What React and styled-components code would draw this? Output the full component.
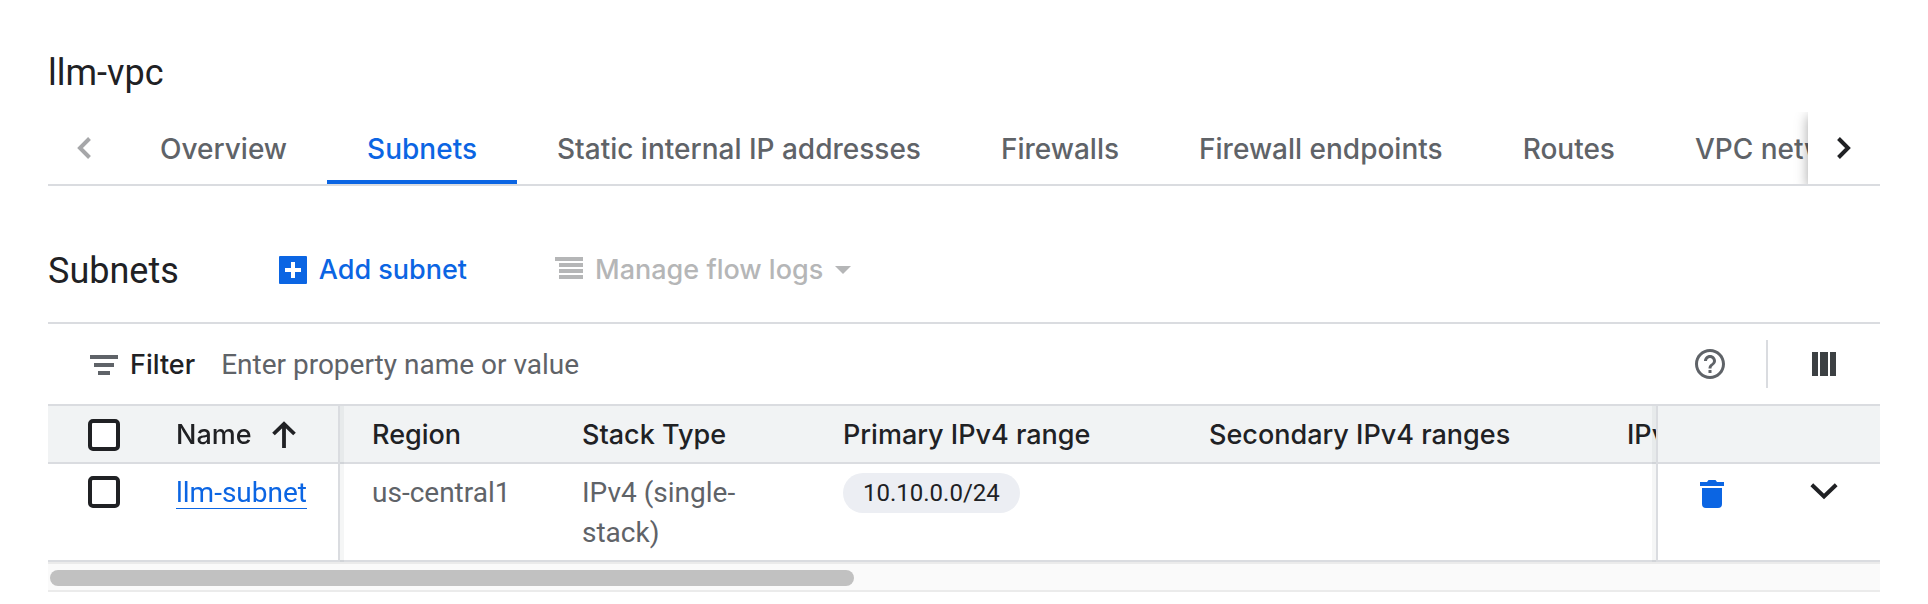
import React from 'react';
import styled, { createGlobalStyle, css } from 'styled-components';

const color = {
  text: '#202124',
  muted: '#5f6368',
  primary: '#0b65e3',
  disabled: '#b5b6b7',
  line: '#dadce0',
  head: '#f1f3f4',
  chip: '#eceef3',
};
const brand = 'Inter, Roboto, sans-serif';
const plain = 'Roboto, sans-serif';

const GlobalStyle = createGlobalStyle`
  *, *::before, *::after { box-sizing: border-box; }
  body { margin: 0; background: #fff; color: ${color.text}; font: 400 28px/40px ${plain}; }
  button { margin: 0; padding: 0; border: 0; background: none; font: inherit; color: inherit; cursor: pointer; }
  svg { display: block; flex: none; fill: currentColor; }
`;

const Page = styled.main`
  padding: 48px 48px 12px;
`;

const Title = styled.h1`
  margin: 0 0 14px;
  font: 400 36px/50px ${plain};
`;

const TabBar = styled.nav`
  display: flex;
  overflow: hidden;
  border-bottom: 2px solid ${color.line};
`;

const TabList = styled.div`
  display: flex;
  flex: 1;
  min-width: 0;
  overflow: hidden;
`;

const Tab = styled.button`
  flex: none;
  height: 72px;
  padding: 6px 40px 0;
  border-bottom: 4px solid ${(p) => (p.$active ? color.primary : 'transparent')};
  color: ${(p) => (p.$active ? color.primary : color.muted)};
  font: 500 28px/40px ${brand};
  white-space: nowrap;
`;

const Pager = styled.button`
  display: grid;
  flex: none;
  place-items: center;
  width: 72px;
  height: 72px;
  background: #fff;
  ${(p) =>
    p.$raised &&
    css`
      z-index: 1;
      box-shadow: 0 4px 12px rgba(0, 0, 0, 0.35);
    `}
  &:disabled { color: #a6a7a9; cursor: default; }
`;

const SectionHead = styled.header`
  display: flex;
  align-items: center;
  height: 104px;
  margin-top: 32px;
`;

const SectionTitle = styled.h2`
  margin: 0 100px 0 0;
  padding-top: 2px;
  font: 400 36px/48px ${plain};
`;

const Action = styled.button`
  display: flex;
  align-items: center;
  gap: 12px;
  margin-right: 88px;
  color: ${color.primary};
  font: 500 27px/40px ${brand};
  white-space: nowrap;
  &:disabled { color: ${color.disabled}; cursor: default; }
`;

const FilterBar = styled.div`
  display: flex;
  align-items: center;
  height: 84px;
  padding: 0 44px 0 42px;
  border: solid ${color.line};
  border-width: 2px 0;
`;

const FilterLabel = styled.label`
  display: flex;
  align-items: center;
  gap: 12px;
  margin-right: 26px;
  padding-top: 2px;
  color: ${color.text};
  font: 500 27px/40px ${brand};
  svg { color: ${color.muted}; }
`;

const FilterInput = styled.input`
  flex: 1;
  min-width: 0;
  padding: 2px 0 0;
  border: 0;
  outline: 0;
  color: ${color.text};
  font: 400 28px/40px ${plain};
  &::placeholder { color: ${color.muted}; opacity: 1; }
`;

const IconButton = styled.button`
  display: block;
  color: ${(p) => p.$color || color.text};
`;

const Divider = styled.span`
  width: 2px;
  height: 48px;
  margin: 0 44px 0 38px;
  background: ${color.line};
`;

const TableScroller = styled.div`
  overflow-x: auto;
  scrollbar-width: none;
`;

const Table = styled.table`
  width: 100%;
  min-width: 2400px;
  table-layout: fixed;
  border-collapse: separate;
  border-spacing: 0;
`;

const Col = styled.col`
  width: ${(p) => p.$width}px;
`;

const pinned = css`
  position: sticky;
  z-index: 1;
  ${(p) => p.$pin === 'select' && 'left: 0;'}
  ${(p) =>
    p.$pin === 'name' &&
    css`
      left: 96px;
      border-right: 2px solid ${color.line};
      box-shadow: 4px 0 rgba(60, 80, 70, 0.05);
    `}
  ${(p) =>
    p.$pin === 'actions' &&
    css`
      right: 0;
      border-left: 2px solid ${color.line};
      box-shadow: -4px 0 rgba(60, 80, 70, 0.05);
    `}
`;

const HeadCell = styled.th`
  height: 58px;
  padding: 2px 0 0 ${(p) => (p.$pin === 'select' ? 40 : 32)}px;
  border-bottom: 2px solid ${color.line};
  background: ${color.head};
  font: 500 27px/40px ${brand};
  text-align: left;
  white-space: nowrap;
  ${(p) => p.$pin && pinned}
`;

const Cell = styled.td`
  height: 98px;
  padding: 9px 32px 7px;
  border-bottom: 2px solid ${color.line};
  background: #fff;
  color: ${color.muted};
  vertical-align: top;
  ${(p) => p.$pin && pinned}
  ${(p) => p.$pin === 'select' && 'padding: 12px 0 0 40px;'}
  ${(p) => p.$pin === 'name' && 'padding-right: 0;'}
`;

const SortButton = styled.button`
  display: flex;
  align-items: center;
  gap: 20px;
`;

const Checkbox = styled.input`
  display: block;
  appearance: none;
  width: 32px;
  height: 32px;
  margin: 0;
  border: 4px solid ${color.text};
  border-radius: 5px;
  background: #fff;
  &:checked { background: ${color.primary}; border-color: ${color.primary}; }
`;

const SubnetLink = styled.a`
  display: inline-block;
  height: 36px;
  border-bottom: 1px solid ${color.primary};
  color: ${color.primary};
  text-decoration: none;
`;

const Chip = styled.span`
  display: inline-block;
  padding: 0 20px;
  border-radius: 20px;
  background: ${color.chip};
  color: ${color.text};
  font: 400 24px/40px ${plain};
  vertical-align: top;
`;

const RowActions = styled.div`
  display: flex;
  align-items: center;
  justify-content: space-between;
  height: 42px;
  padding: 0 10px;
`;

const ScrollTrack = styled.div`
  padding: 6px 2px 4px;
  border: solid #ebebeb;
  border-width: 2px 0;
  background: #fafafa;
`;

const ScrollThumb = styled.div`
  width: 44%;
  height: 16px;
  border-radius: 8px;
  background: #c1c1c1;
`;

const Chevron = ({ dir }) => {
  const [w, h, d] = {
    left: [14, 22, 'M12.5 1.5 3 11l9.5 9.5'],
    right: [14, 22, 'M1.5 1.5 11 11l-9.5 9.5'],
    down: [28, 22, 'M1.8 1.8 14 13.500 26.200 1.800'],
  }[dir];
  return (
    <svg width={w} height={h} viewBox={`0 0 ${w} ${h}`} aria-hidden="true">
      <path d={d} fill="none" stroke="currentColor" strokeWidth="4" />
    </svg>
  );
};

const AddIcon = () => (
  <svg width="28" height="28" viewBox="0 0 28 28" aria-hidden="true">
    <path fillRule="evenodd" d="M1 0h26a1 1 0 0 1 1 1v26a1 1 0 0 1-1 1H1a1 1 0 0 1-1-1V1a1 1 0 0 1 1-1Zm11 6v6H6v4h6v6h4v-6h6v-4h-6V6Z" />
  </svg>
);

const LogsIcon = () => (
  <svg width="28" height="28" viewBox="0 0 28 28" aria-hidden="true">
    <path d="M0 1h28v4H0zM4 7h24v4H4zM4 13h24v4H4zM4 19h24v4H4z" />
  </svg>
);

const CaretIcon = () => (
  <svg width="16" height="8" viewBox="0 0 16 8" aria-hidden="true">
    <path d="M0 0h16L8 8z" />
  </svg>
);

const FilterIcon = () => (
  <svg width="28" height="20" viewBox="0 0 28 20" aria-hidden="true">
    <path d="M0 0h28v4H0zM4 8h20v4H4zM8 16h12v4H8z" />
  </svg>
);

const HelpIcon = () => (
  <svg width="36" height="36" viewBox="0 0 24 24" aria-hidden="true">
    <path d="M11 18h2v-2h-2v2zm1-16C6.48 2 2 6.48 2 12s4.48 10 10 10 10-4.48 10-10S17.52 2 12 2zm0 18c-4.41 0-8-3.59-8-8s3.59-8 8-8 8 3.59 8 8-3.59 8-8 8zm0-14c-2.21 0-4 1.79-4 4h2c0-1.1.9-2 2-2s2 .9 2 2c0 2-3 1.75-3 5h2c0-2.25 3-2.5 3-5 0-2.21-1.79-4-4-4z" />
  </svg>
);

const ColumnsIcon = () => (
  <svg width="24" height="24" viewBox="0 0 24 24" aria-hidden="true">
    <path d="M0 0h6v24H0zM8 0h8v24H8zM18 0h6v24h-6z" />
  </svg>
);

const SortIcon = () => (
  <svg width="24" height="28" viewBox="0 0 24 28" aria-hidden="true">
    <path d="M12 27V4M1.5 13 12 2.8 22.5 13" fill="none" stroke="currentColor" strokeWidth="3.8" />
  </svg>
);

const TrashIcon = () => (
  <svg width="24" height="28" viewBox="0 0 24 28" aria-hidden="true">
    <path d="M0 2h7l1.500-2h7L17 2h7v4H0zM2 8h20v16a4 4 0 0 1-4 4H6a4 4 0 0 1-4-4z" />
  </svg>
);

const tabs = [
  'Overview',
  'Subnets',
  'Static internal IP addresses',
  'Firewalls',
  'Firewall endpoints',
  'Routes',
  'VPC network peering',
];

const columns = [
  { label: 'Region', width: 210 },
  { label: 'Stack Type', width: 261 },
  { label: 'Primary IPv4 range', width: 366 },
  { label: 'Secondary IPv4 ranges', width: 418 },
  { label: 'IPv6 ranges' },
];

export default function App() {
  return (
    <>
      <GlobalStyle />
      <Page>
        <Title>llm-vpc</Title>
        <TabBar aria-label="VPC network details">
          <Pager disabled aria-label="Previous tabs">
            <Chevron dir="left" />
          </Pager>
          <TabList role="tablist">
            {tabs.map((t) => (
              <Tab key={t} role="tab" aria-selected={t === 'Subnets'} $active={t === 'Subnets'}>
                {t}
              </Tab>
            ))}
          </TabList>
          <Pager $raised aria-label="Next tabs">
            <Chevron dir="right" />
          </Pager>
        </TabBar>

        <SectionHead>
          <SectionTitle>Subnets</SectionTitle>
          <Action>
            <AddIcon />
            Add subnet
          </Action>
          <Action disabled>
            <LogsIcon />
            Manage flow logs
            <CaretIcon />
          </Action>
        </SectionHead>

        <FilterBar>
          <FilterLabel htmlFor="filter">
            <FilterIcon />
            Filter
          </FilterLabel>
          <FilterInput id="filter" placeholder="Enter property name or value" />
          <IconButton $color={color.muted} aria-label="Help">
            <HelpIcon />
          </IconButton>
          <Divider />
          <IconButton $color="#3c4043" aria-label="Column display options">
            <ColumnsIcon />
          </IconButton>
        </FilterBar>

        <TableScroller>
          <Table>
            <colgroup>
              <Col $width={96} />
              <Col $width={196} />
              {columns.map((c) => (c.width ? <Col key={c.label} $width={c.width} /> : <col key={c.label} />))}
              <Col $width={224} />
            </colgroup>
            <thead>
              <tr>
                <HeadCell $pin="select">
                  <Checkbox type="checkbox" aria-label="Select all subnets" />
                </HeadCell>
                <HeadCell $pin="name">
                  <SortButton>
                    Name
                    <SortIcon />
                  </SortButton>
                </HeadCell>
                {columns.map((c) => (
                  <HeadCell key={c.label}>{c.label}</HeadCell>
                ))}
                <HeadCell $pin="actions" aria-label="Actions" />
              </tr>
            </thead>
            <tbody>
              <tr>
                <Cell $pin="select">
                  <Checkbox type="checkbox" aria-label="Select llm-subnet" />
                </Cell>
                <Cell $pin="name">
                  <SubnetLink href="#llm-subnet">llm-subnet</SubnetLink>
                </Cell>
                <Cell>us-central1</Cell>
                <Cell>IPv4 (single-stack)</Cell>
                <Cell>
                  <Chip>10.10.0.0/24</Chip>
                </Cell>
                <Cell />
                <Cell />
                <Cell $pin="actions">
                  <RowActions>
                    <IconButton $color={color.primary} aria-label="Delete llm-subnet">
                      <TrashIcon />
                    </IconButton>
                    <IconButton aria-label="Expand llm-subnet">
                      <Chevron dir="down" />
                    </IconButton>
                  </RowActions>
                </Cell>
              </tr>
            </tbody>
          </Table>
        </TableScroller>
        <ScrollTrack aria-hidden="true">
          <ScrollThumb />
        </ScrollTrack>
      </Page>
    </>
  );
}
